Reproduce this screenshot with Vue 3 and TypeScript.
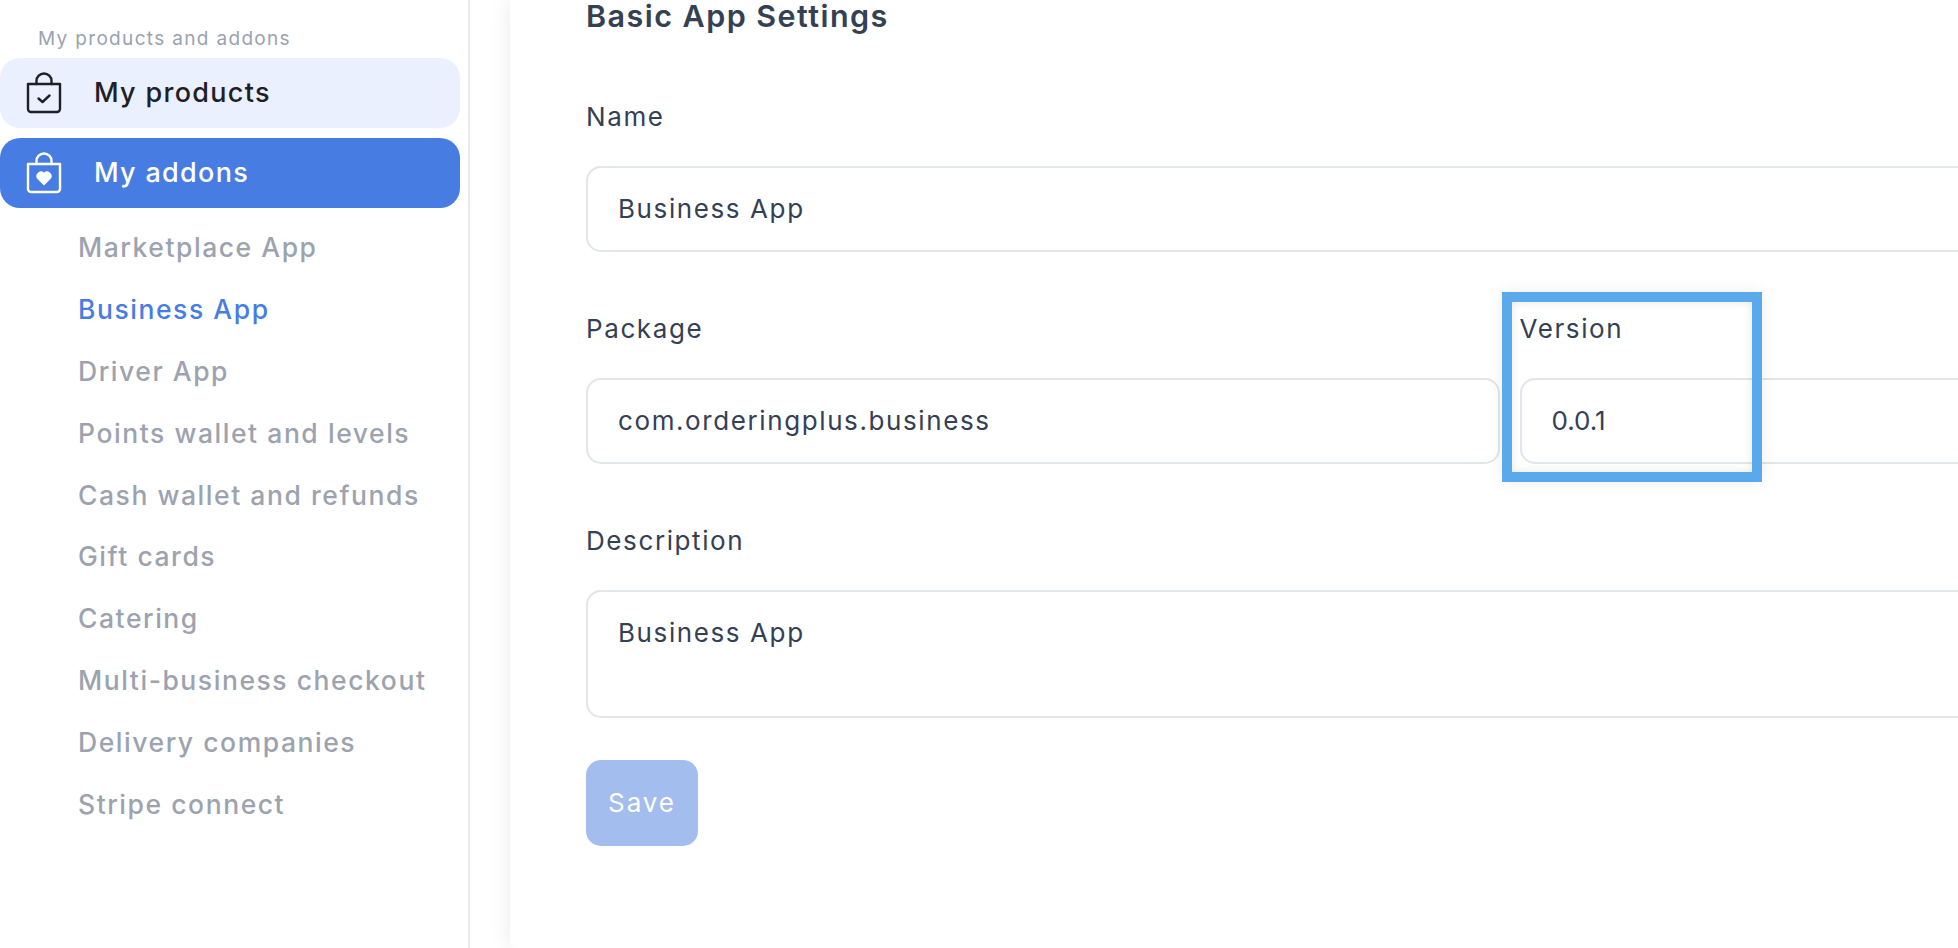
<script setup lang="ts">
const addons: string[] = [
  'Marketplace App',
  'Business App',
  'Driver App',
  'Points wallet and levels',
  'Cash wallet and refunds',
  'Gift cards',
  'Catering',
  'Multi-business checkout',
  'Delivery companies',
  'Stripe connect',
]
const activeAddon = 'Business App'
</script>

<template>
  <div class="page">
    <aside class="sidebar">
      <p class="group-title">My products and addons</p>
      <nav class="menu">
        <a class="menu-item soft">
          <svg class="bag" viewBox="0 0 36 42" fill="none" stroke="currentColor" stroke-width="2.4" stroke-linejoin="round" stroke-linecap="round">
            <path d="M2 12H34V37a3 3 0 0 1-3 3H5a3 3 0 0 1-3-3Z" />
            <path d="M10.5 12V9a7.5 7.5 0 0 1 15 0V12" />
            <path d="M12.5 26.5 16.5 30 23.5 23.5" />
          </svg>
          <span>My products</span>
        </a>
        <a class="menu-item solid">
          <svg class="bag" viewBox="0 0 36 42" fill="none" stroke="currentColor" stroke-width="2.4" stroke-linejoin="round" stroke-linecap="round">
            <path d="M2 12H34V37a3 3 0 0 1-3 3H5a3 3 0 0 1-3-3Z" />
            <path d="M10.5 12V9a7.5 7.5 0 0 1 15 0V12" />
            <path d="M18 33.5 11 26.5a4.7 4.7 0 0 1 7-6 4.7 4.7 0 0 1 7 6Z" fill="currentColor" stroke="none" />
          </svg>
          <span>My addons</span>
        </a>
      </nav>
      <ul class="submenu">
        <li v-for="item in addons" :key="item" :class="{ active: item === activeAddon }">{{ item }}</li>
      </ul>
    </aside>

    <main class="panel">
      <h2 class="title">Basic App Settings</h2>

      <div class="field">
        <label class="label">Name</label>
        <div class="input">Business App</div>
      </div>

      <div class="row">
        <div class="field">
          <label class="label">Package</label>
          <div class="input">com.orderingplus.business</div>
        </div>
        <div class="field version">
          <label class="label">Version</label>
          <div class="input numeric">0.0.1</div>
          <div class="callout"></div>
        </div>
      </div>

      <div class="field">
        <label class="label">Description</label>
        <div class="input area">Business App</div>
      </div>

      <button class="save" type="button">Save</button>
    </main>
  </div>
</template>

<style scoped>
.page {
  display: flex;
  width: 1958px;
  height: 948px;
  overflow: hidden;
  background: #fff;
  font-family: Inter, "Noto Sans", sans-serif;
  color: #344054;
}
.sidebar {
  flex: 0 0 470px;
  box-sizing: border-box;
  height: 948px;
  border-right: 2px solid #e9ebf2;
  background: #fff;
}
.group-title {
  margin: 0;
  padding: 26px 0 0 38px;
  height: 32px;
  font-size: 19px;
  line-height: 25px;
  letter-spacing: 1.33px;
  color: #9aa2b1;
}
.menu {
  display: flex;
  flex-direction: column;
  gap: 10px;
  width: 460px;
}
.menu-item {
  display: flex;
  align-items: center;
  box-sizing: border-box;
  height: 70px;
  padding-left: 26px;
  border-radius: 20px;
  font-size: 27px;
  font-weight: 500;
  letter-spacing: 1.3px;
}
.menu-item span {
  padding-bottom: 2px;
}
.menu-item.soft {
  background: #eaf0fd;
  color: #1d2127;
}
.menu-item.solid {
  background: #477de2;
  color: #fff;
}
.bag {
  width: 36px;
  height: 42px;
  margin-right: 32px;
  flex: none;
}
.submenu {
  list-style: none;
  margin: 9px 0 0;
  padding: 0 0 0 78px;
}
.submenu li {
  height: 61.9px;
  line-height: 61.9px;
  font-size: 26.5px;
  font-weight: 500;
  letter-spacing: 1.55px;
  color: #9ca3af;
  white-space: nowrap;
}
.submenu li.active {
  color: #477de2;
}
.panel {
  flex: none;
  box-sizing: border-box;
  width: 1920px;
  height: 948px;
  margin-left: 40px;
  padding: 0 0 0 76px;
  border-radius: 0 0 0 6px;
  background: #fff;
  box-shadow: 0 0 22px rgba(0, 0, 0, 0.09);
}
.title {
  margin: 0 0 70px;
  height: 32px;
  font-size: 30.5px;
  line-height: 32px;
  font-weight: 600;
  letter-spacing: 1.45px;
  color: #344054;
}
.row {
  display: grid;
  grid-template-columns: 913.5px 913px;
  column-gap: 20px;
  margin-top: 62px;
}
.field {
  position: relative;
  width: 1846px;
}
.row .field {
  width: auto;
}
.row + .field {
  margin-top: 62px;
}
.label {
  display: block;
  height: 30px;
  margin-bottom: 34px;
  font-size: 26px;
  line-height: 30px;
  letter-spacing: 1.6px;
  color: #344054;
}
.input {
  box-sizing: border-box;
  height: 86px;
  padding: 0 30px;
  border: 2px solid #e2e5ea;
  border-radius: 15px;
  background: #fff;
  font-size: 26px;
  line-height: 82px;
  letter-spacing: 1.6px;
  color: #344054;
}
.input.numeric {
  letter-spacing: 0;
}
.input.area {
  height: 128px;
  line-height: 38px;
  padding-top: 22px;
}
.callout {
  position: absolute;
  left: -17.5px;
  top: -22px;
  box-sizing: border-box;
  width: 260px;
  height: 190px;
  border: 10px solid #5aa9ea;
  box-shadow: 0 0 14px rgba(0, 0, 0, 0.08), inset 0 0 10px rgba(0, 0, 0, 0.1);
  pointer-events: none;
}
.save {
  display: block;
  width: 112px;
  height: 86px;
  margin-top: 42px;
  padding: 0 0 2px;
  border: 0;
  border-radius: 15px;
  background: #a3bdee;
  color: #fff;
  font-family: inherit;
  font-size: 26px;
  letter-spacing: 1.9px;
}
</style>
